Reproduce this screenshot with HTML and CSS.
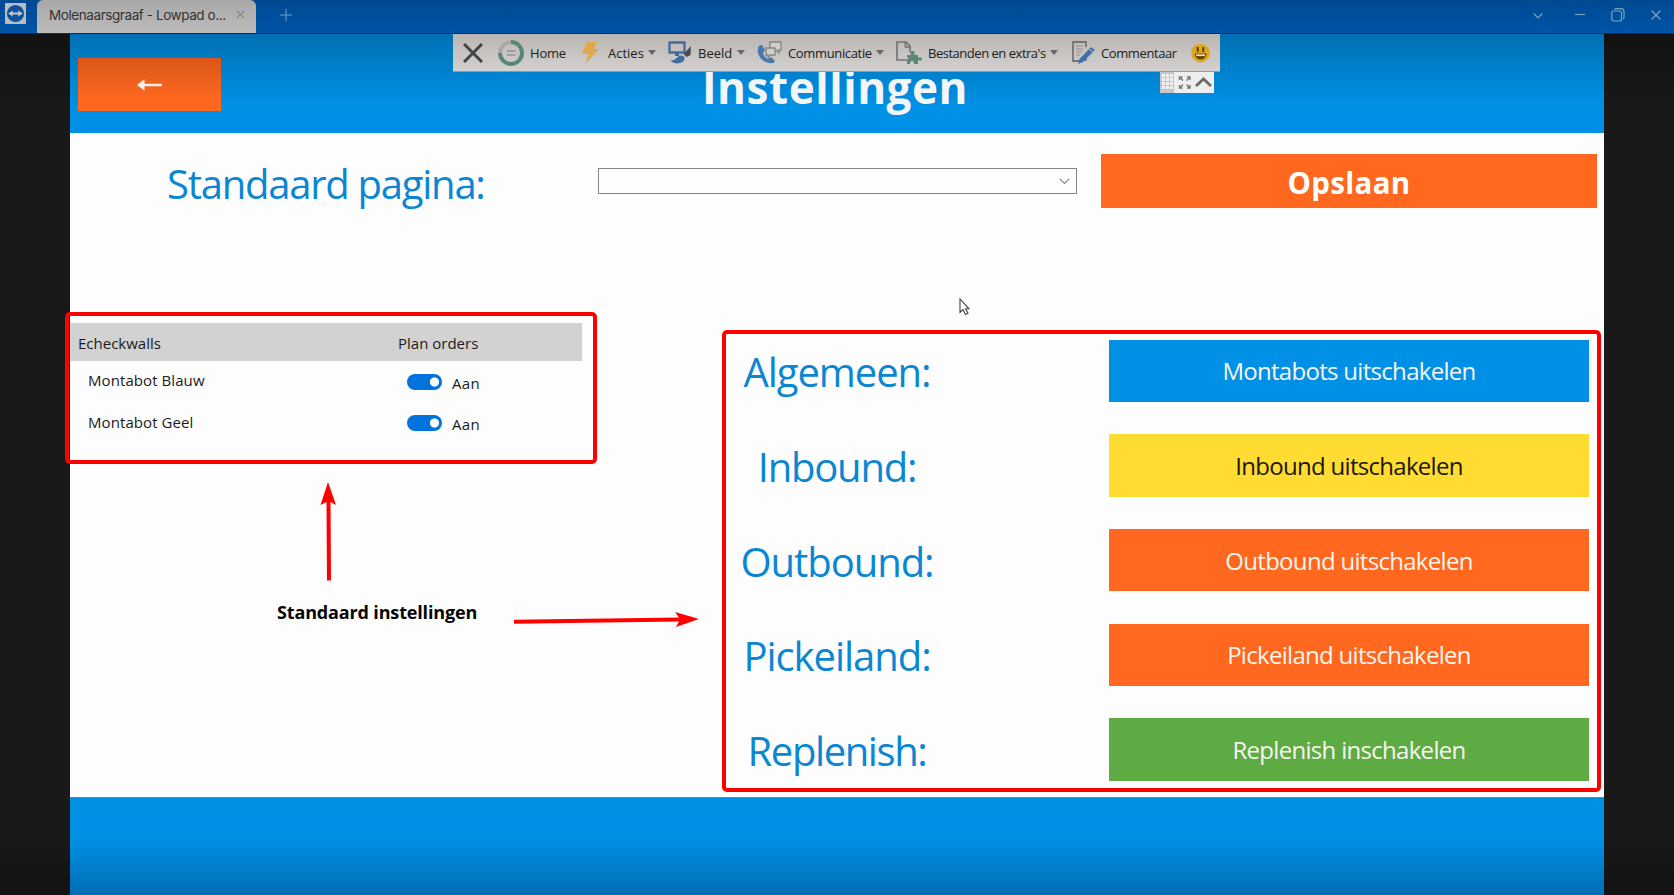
FILE: index.html
```html
<!DOCTYPE html>
<html lang="nl">
<head>
<meta charset="utf-8">
<title>Instellingen</title>
<link rel="stylesheet" href="styles.css">
</head>
<body>
<div class="window">
  <header class="tabbar">
    <svg class="logo" viewBox="0 0 21 21"><rect width="21" height="21" rx="1" fill="#b9bcc0"/><circle cx="10.500" cy="10.500" r="8.600" fill="#0b529d"/><path d="M3.200 10.500l4.500-3v2h5.600v-2l4.500 3-4.500 3v-2H7.700v2z" fill="#c3c7cb"/></svg>
    <div class="tab"><span class="tab-title">Molenaarsgraaf - Lowpad o...</span><svg class="tab-close" viewBox="0 0 10 10"><path d="M1 1l8 8M9 1l-8 8"/></svg></div>
    <svg class="tab-add" viewBox="0 0 12 12"><path d="M6 0v12M0 6h12"/></svg>
    <div class="win-controls">
      <svg width="10" height="14" viewBox="0 0 10 14"><path d="M.7 5.500L5 10l4.300-4.500"/></svg>
      <svg width="10" height="14" viewBox="0 0 10 14"><path d="M0 6.500h10"/></svg>
      <svg width="14" height="14" viewBox="0 0 14 14"><rect x=".7" y="3" width="9.800" height="10" rx="2"/><path d="M3.500 1.500Q4 .7 5.500.7H10Q13 .7 13 3.700V9q0 1.500-1 2"/></svg>
      <svg width="10" height="14" viewBox="0 0 10 14"><path d="M.5 2.500l9 9M9.500 2.500l-9 9"/></svg>
    </div>
  </header>

  <main class="screen">
    <section class="banner">
      <button class="back"><svg width="25" height="12" viewBox="0 0 25 12"><path d="M0 6L7.500 .3v4.500H25v2.400H7.500v4.500z" fill="#f3efec"/></svg></button>
      <h1 class="title">Instellingen</h1>
    </section>

    <section class="content">
      <div class="default-page">
        <label class="label page-label">Standaard pagina:</label>
        <div class="select"><svg width="11" height="7" viewBox="0 0 11 7"><path d="M.8.8l4.700 4.700L10.200.8"/></svg></div>
        <button class="save">Opslaan</button>
      </div>
      <div class="panels">
        <div class="walls">
          <div class="walls-head"><span class="w-echeck">Echeckwalls</span><span class="w-plan">Plan orders</span></div>
          <div class="walls-row"><span>Montabot Blauw</span><i class="toggle"></i><span class="aan">Aan</span></div>
          <div class="walls-row"><span>Montabot Geel</span><i class="toggle"></i><span class="aan">Aan</span></div>
        </div>
        <div class="switches">
          <div class="switch"><span class="label">Algemeen:</span><button class="action blue">Montabots uitschakelen</button></div>
          <div class="switch"><span class="label tight">Inbound:</span><button class="action yellow">Inbound uitschakelen</button></div>
          <div class="switch"><span class="label">Outbound:</span><button class="action orange">Outbound uitschakelen</button></div>
          <div class="switch"><span class="label">Pickeiland:</span><button class="action orange">Pickeiland uitschakelen</button></div>
          <div class="switch"><span class="label tighter">Replenish:</span><button class="action green">Replenish inschakelen</button></div>
        </div>
      </div>
    </section>
    <footer class="footer"></footer>
  </main>

  <nav class="toolbar">
    <svg class="tool-x" width="20" height="20" viewBox="0 0 20 20"><path d="M1 1l18 18M19 1L1 19" stroke="#444345" stroke-width="3" fill="none"/></svg>
    <div class="tool home"><svg width="26" height="26" viewBox="0 0 26 26" fill="none"><circle cx="13" cy="13" r="11" stroke="#aaa8a7" stroke-width="3.500"/><path d="M13 2a11 11 0 1 1-11 11" stroke="#568676" stroke-width="3.800"/><path d="M9 11h8.500M9 15h8.500" stroke="#949391" stroke-width="1.300"/></svg><span>Home</span></div>
    <div class="tool acties"><svg width="17" height="22" viewBox="0 0 17 22"><path d="M4.500 0h11l-4 7H17L3 22l3.500-10H0z" fill="#dfa94b"/></svg><span>Acties</span><i class="caret"></i></div>
    <div class="tool beeld"><svg width="24" height="23" viewBox="0 0 24 23"><path d="M1.500 1.500h15v10h-15z" fill="none" stroke="#416c9f" stroke-width="2.300"/><path d="M7 12h4v3H7z" fill="#416c9f"/><path d="M23 5l-.5 9-4 2-3-3z" fill="#4b4d50"/><path d="M2 19.500q5 0 7-3 3-3.500 7-1 2 5-4 6.500-5 1.500-10-2.500z" fill="#416c9f"/></svg><span>Beeld</span><i class="caret"></i></div>
    <div class="tool comm"><svg width="25" height="23" viewBox="0 0 25 23"><path d="M3 4Q0 6 1 12q3 9 11 10 5 1 6-2l-4-4-3 2q-4-2-5-6l2-3-3-5z" fill="#4878ae"/><g fill="#d0cdcb" stroke="#838485" stroke-width="1.300"><path d="M13 1h11v8h-2v3l-3-3h-6z"/><path d="M9 7h9v7h-5l-2 3v-3H9z"/></g></svg><span>Communicatie</span><i class="caret"></i></div>
    <div class="tool files"><svg width="26" height="24" viewBox="0 0 26 24"><path d="M11 19H1V1h9l4 4v6M9.500 1v5H14" fill="none" stroke="#747474" stroke-width="1.700"/><path d="M11 14h4q-2-4 1.500-4t1.500 4h4v3q4-2 4 1t-4 1v4h-4q0-3-2-3t-2 3h-3v-4q2-2 0-3z" fill="#5c8977"/></svg><span>Bestanden en extra's</span><i class="caret"></i></div>
    <div class="tool comment"><svg width="23" height="23" viewBox="0 0 23 23"><path d="M8 20H1V1h13v5M14 15v4h-4" fill="none" stroke="#737475" stroke-width="1.800"/><path d="M4 5h7M4 8h7M4 11h6M4 14h4" stroke="#929292"/><path d="M19 6l4 3L11 21l-5 2 1.500-5z" fill="#426fa9"/><path d="M17 8l4 3" stroke="#b8b9bc"/></svg><span>Commentaar</span></div>
    <svg class="smile" width="19" height="20" viewBox="0 0 19 20"><circle cx="9.500" cy="10" r="9.300" fill="#dca91c"/><path d="M6.700 4v5M12.300 4v5" stroke="#63420b" stroke-width="2"/><path d="M3.500 10.500h12q-1 6-6 6t-6-6z" fill="#684106"/><path d="M5 11.300h9v1.800H5z" fill="#eee1ba"/></svg>
  </nav>
  <div class="toolbar-tabs">
    <svg width="54" height="21" viewBox="0 0 54 21"><path fill="#c4c6c8" d="M0 0h14v21H0z"/><path fill="#f2f2f2" d="M2 2h3v3H2zM6 2h3v3H6zM10 2h3v3h-3zM2 6h3v3H2zM6 6h3v3H6zM10 6h3v3h-3zM2 10h3v3H2zM6 10h3v3H6zM10 10h3v3h-3zM2 14h3v3H2zM6 14h3v3H6zM10 14h3v3h-3z"/><g stroke="#777" stroke-width="1.400" fill="none"><path d="M19.500 8V5h3M19.500 5l3.500 3.500M27 5h3v3M30 5l-3.500 3.500M19.500 13v3h3M19.500 16l3.500-3.500M30 13v3h-3M30 16l-3.500-3.500"/></g><path d="M36 14l7.500-7 7.500 7" fill="none" stroke="#6b6b6b" stroke-width="2.800"/></svg>
  </div>

  <div class="mark mark-left"></div>
  <div class="mark mark-right"></div>
  <svg class="arrow arrow-up" width="18" height="100" viewBox="0 0 18 100"><path d="M8 0L16 23l-5.500-3 .5 78.500H7L6.500 20 .5 23z" fill="#f00"/></svg>
  <svg class="arrow arrow-right" width="186" height="18" viewBox="0 0 186 18"><path d="M185 8L162 16l3-5.500L0 12.700v-4L165 6.500 161 1z" fill="#f00"/></svg>
  <strong class="note">Standaard instellingen</strong>
  <svg class="cursor" width="12" height="18" viewBox="0 0 12 18"><path d="M1 1v13.500l3-3 2.500 5 2.500-1.200-2.400-4.500H10z" fill="#fff" stroke="#444" stroke-width="1.100"/></svg>
</div>
</body>
</html>
```

FILE: styles.css
```css
* { box-sizing: border-box; }
body { margin: 0; background: #191919; font-family: "Open Sans", "Noto Sans", sans-serif; }
button { border: 0; padding: 0; margin: 0; font: inherit; color: inherit; display: flex; align-items: center; justify-content: center; white-space: nowrap; }
svg { display: block; flex: none; }
span, label, h1 { white-space: nowrap; }

.window { position: relative; width: 1674px; height: 895px; overflow: hidden; display: flex; flex-direction: column; background: linear-gradient(#121212 34px, #191919 110px, #191919 835px, #121212); }

.tabbar { height: 34px; flex: none; display: flex; align-items: flex-start; background: linear-gradient(#004a90, #0053a8 32px); border-bottom: 1px solid #062e58; }
.logo { width: 21px; height: 21px; margin: 3px 11px 0 5px; }
.tab { width: 219px; height: 33px; display: flex; align-items: center; padding: 0 11px 4px 12px; background: linear-gradient(#a8a8a8, #bdbcbb); border-radius: 6px 6px 0 0; color: #333; }
.tab-title { font: 13.500px/20px Inter, sans-serif; letter-spacing: -.42px; flex: 1; }
.tab-close { width: 9px; height: 9px; stroke: #666; fill: none; }
.tab-add { width: 12px; height: 12px; margin: 9px 0 0 24px; stroke: #6fa0cc; fill: none; }
.win-controls { margin: 8px 13px 0 auto; display: flex; }
.win-controls svg { fill: none; stroke: #79a3bc; stroke-width: 1.200; }
.win-controls svg:nth-child(2) { margin-left: 32px; }
.win-controls svg:nth-child(3), .win-controls svg:nth-child(4) { margin-left: 26px; }

.screen { width: 1534px; height: 861px; margin-left: 70px; display: flex; flex-direction: column; }
.banner { height: 99px; display: flex; align-items: flex-start; padding: 24px 0 0 8px; background: linear-gradient(#0070b3, #0091e6 72px, #008fe6); }
.back { width: 143px; height: 53px; background: linear-gradient(#d95618, #fe681e 42px); }
.title { margin: 0 0 0 481px; font-size: 44px; font-weight: 700; line-height: 59px; letter-spacing: .55px; color: #f3f5f6; }

.content { height: 664px; background: #fdfdfd; padding-top: 21px; }
.default-page { height: 54px; display: flex; align-items: flex-start; }
.label { font-size: 40px; line-height: 54px; letter-spacing: -1.050px; padding-top: 3px; color: #0a86d2; }
.page-label { width: 431px; margin-left: 97px; letter-spacing: -1.250px; }
.select { width: 479px; height: 26px; margin-top: 14px; border: 1px solid #858585; display: flex; align-items: center; justify-content: flex-end; padding-right: 6px; }
.select svg { fill: none; stroke: #858585; stroke-width: 1.200; }
.save { width: 496px; height: 54px; margin-left: 24px; background: #ff681e; color: #fff; font-size: 29.500px; font-weight: 700; letter-spacing: .3px; padding-top: 3px; }

.panels { display: flex; align-items: flex-start; }
.walls { width: 512px; margin-top: 115px; font-size: 15px; color: #1b1b1b; }
.walls-head { height: 38px; display: flex; align-items: center; padding: 1px 0 0 8px; background: #d2d2d2; }
.w-echeck { width: 320px; }
.walls-row { height: 41.500px; display: flex; align-items: center; padding-left: 18px; }
.walls-row > span:first-child { width: 319px; padding-bottom: 3px; letter-spacing: .08px; }
.toggle { width: 35px; height: 16px; border-radius: 8px; background: radial-gradient(circle at 27.500px 8px, #fff 4.200px, #0073dd 5px); }
.aan { margin: 2px 0 0 10px; letter-spacing: .3px; }
.switches { width: 1007px; margin: 131.500px 15px 0 0; display: flex; flex-direction: column; gap: 32.200px; }
.switch { height: 62.500px; display: flex; justify-content: flex-end; align-items: center; }
.switch .label { width: 300px; margin-right: 122px; text-align: center; }
.switch .tight { letter-spacing: -1.200px; }
.switch .tighter { letter-spacing: -1.400px; }
.action { width: 480px; height: 62.500px; font-size: 24px; letter-spacing: -.7px; color: #f7f5ed; }
.blue { background: #0091e6; }
.yellow { background: #ffdc31; color: #1c1706; }
.orange { background: #ff681e; }
.green { background: #5eaa43; }

.footer { height: 98px; border-top: 1px solid #6d8296; background: linear-gradient(#008fe3, #0090e5 40px, #006eb5); }

.toolbar { position: absolute; left: 453px; top: 34px; width: 767px; height: 38px; display: flex; align-items: center; padding-left: 10px; background: linear-gradient(#b9b5b2, #d3d1d0); border-bottom: 1px solid #999; font-size: 13px; color: #202020; }
.tool { display: flex; align-items: center; height: 37px; flex: none; }
.tool-x { margin-right: 15px; }
.tool svg { margin-right: 6px; }
.caret { width: 0; height: 0; border: 4px solid transparent; border-top: 5px solid #666; border-bottom: 0; margin-left: auto; }
.home { width: 84px; letter-spacing: -.2px; }
.acties { width: 74px; margin-right: 12px; }
.tool.acties svg { margin-right: 9px; }
.beeld { width: 77px; margin-right: 12px; }
.comm { width: 127px; margin-right: 12px; letter-spacing: -.35px; }
.files { width: 162px; margin-right: 14px; letter-spacing: -.48px; }
.comment { width: 119px; letter-spacing: -.4px; }
.toolbar-tabs { position: absolute; left: 1160px; top: 72px; background: #eee; }

.mark { position: absolute; border: 4px solid #f00; border-radius: 5px; }
.mark-left { left: 65px; top: 312px; width: 532px; height: 152px; }
.mark-right { left: 722px; top: 330px; width: 879px; height: 462px; }
.arrow { position: absolute; }
.arrow-up { left: 320px; top: 482px; }
.arrow-right { left: 514px; top: 611px; }
.note { position: absolute; left: 277px; top: 599px; font-size: 18px; line-height: 26px; letter-spacing: -.15px; white-space: nowrap; color: #050505; }
.cursor { position: absolute; left: 959px; top: 298px; }
```
